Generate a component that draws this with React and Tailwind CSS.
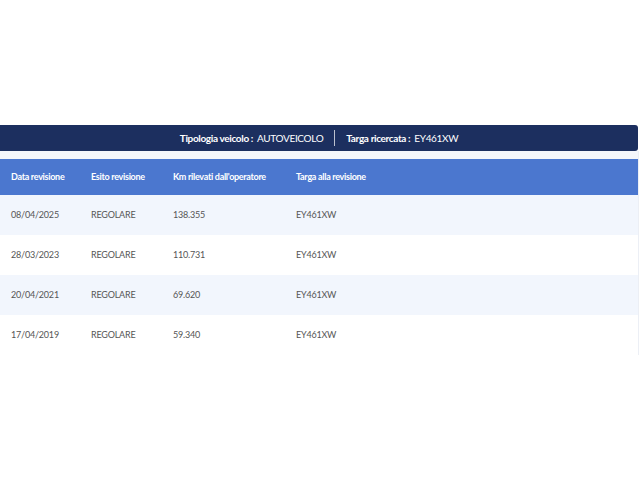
const rows = [
  { data: '08/04/2025', esito: 'REGOLARE', km: '138.355', targa: 'EY461XW' },
  { data: '28/03/2023', esito: 'REGOLARE', km: '110.731', targa: 'EY461XW' },
  { data: '20/04/2021', esito: 'REGOLARE', km: '69.620', targa: 'EY461XW' },
  { data: '17/04/2019', esito: 'REGOLARE', km: '59.340', targa: 'EY461XW' },
];

function Cols({ children, className }) {
  return (
    <div className={`grid grid-cols-[80px_82px_123px_1fr] pl-[11px] ${className}`}>
      {children}
    </div>
  );
}

export default function App() {
  return (
    <div className="h-[480px] w-[640px] bg-white font-['Lato',sans-serif]">
      <div className="pt-[125px]">
        <div className="flex h-[26px] w-[638px] items-center justify-center rounded-r-[3px] bg-[#1c2f5f] text-[10px] tracking-[-0.35px] text-white">
          <span className="font-bold">Tipologia veicolo :</span>
          <span className="ml-[4px]">AUTOVEICOLO</span>
          <span className="mx-[11px] h-[16px] w-px bg-white/70" />
          <span className="font-bold">Targa ricercata :</span>
          <span className="ml-[4px]">EY461XW</span>
        </div>

        <div className="w-[639px] border-r border-[#eceff5] bg-[#f4f6fb] pt-[8px]">
          <Cols className="h-[36px] items-center bg-[#4b77cf] text-[9px] font-bold tracking-[-0.3px] text-white">
            <div>Data revisione</div>
            <div>Esito revisione</div>
            <div>Km rilevati dall'operatore</div>
            <div>Targa alla revisione</div>
          </Cols>
          {rows.map((r, i) => (
            <Cols
              key={r.data}
              className={`h-[40px] items-center text-[9px] tracking-[-0.2px] text-[#555555] ${i % 2 === 0 ? 'bg-[#f2f6fd]' : 'bg-white'}`}
            >
              <div>{r.data}</div>
              <div>{r.esito}</div>
              <div>{r.km}</div>
              <div>{r.targa}</div>
            </Cols>
          ))}
        </div>
      </div>
    </div>
  );
}
